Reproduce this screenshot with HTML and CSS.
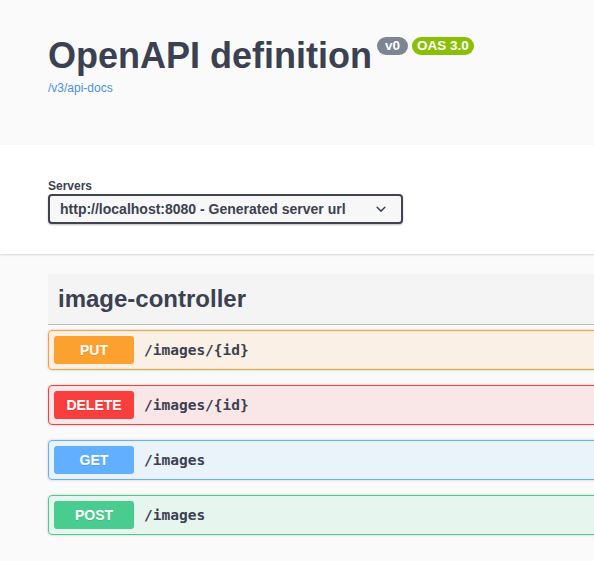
FILE: index.html
```html
<!DOCTYPE html>
<html lang="en">
<head>
<meta charset="utf-8">
<title>Swagger UI</title>
<link rel="stylesheet" href="styles.css">
</head>
<body>
<div class="page">
  <section class="info">
    <div class="wrapper">
      <div class="title-row">
        <h2 class="title">OpenAPI definition</h2>
        <span class="badge badge-version">v0</span>
        <span class="badge badge-oas">OAS 3.0</span>
      </div>
      <a class="spec-link" href="#">/v3/api-docs</a>
    </div>
  </section>

  <section class="scheme">
    <div class="wrapper">
      <div class="servers-label">Servers</div>
      <div class="select">
        <span class="select-text">http://localhost:8080 - Generated server url</span>
        <svg class="select-arrow" viewBox="0 0 20 20" width="20" height="20" aria-hidden="true">
          <path d="M13.418 7.859a.695.695 0 0 1 .978 0 .68.68 0 0 1 0 .969l-3.908 3.83a.697.697 0 0 1-.979 0l-3.908-3.83a.68.68 0 0 1 0-.969.695.695 0 0 1 .978 0L10 11l3.418-3.141z" fill="#3b4151"/>
        </svg>
      </div>
    </div>
  </section>

  <section class="operations">
    <div class="wrapper">
      <h3 class="tag">image-controller</h3>
      <div class="opblock opblock-put">
        <span class="method">PUT</span>
        <span class="path">/images/{id}</span>
      </div>
      <div class="opblock opblock-delete">
        <span class="method">DELETE</span>
        <span class="path">/images/{id}</span>
      </div>
      <div class="opblock opblock-get">
        <span class="method">GET</span>
        <span class="path">/images</span>
      </div>
      <div class="opblock opblock-post">
        <span class="method">POST</span>
        <span class="path">/images</span>
      </div>
    </div>
  </section>
</div>
</body>
</html>
```

FILE: styles.css
```css
html, body {
  margin: 0;
  padding: 0;
  background: #fafafa;
  overflow: hidden;
}

body {
  font-family: "Liberation Sans", Arial, sans-serif;
  color: #3b4151;
}

.page {
  width: 1100px;
}

.wrapper {
  padding: 0 48px;
}

/* Info header */
.info {
  background: #fafafa;
  height: 145px;
  box-sizing: border-box;
  padding-top: 37px;
}

.title-row {
  display: flex;
  align-items: flex-start;
}

.title {
  margin: 1px 0 0;
  font-size: 36px;
  line-height: 36px;
  font-weight: 700;
  color: #3b4151;
}

.badge {
  display: inline-block;
  height: 18px;
  box-sizing: border-box;
  font-size: 13.5px;
  line-height: 18px;
  font-weight: 700;
  color: #fff;
  border-radius: 57px;
}

.badge-version {
  background: #7d8492;
  margin-left: 5px;
  padding: 0 8px;
}

.badge-oas {
  background: #89bf04;
  margin-left: 4px;
  padding: 0 5px;
}

.spec-link {
  display: block;
  margin-top: 7px;
  font-size: 12px;
  line-height: 14px;
  color: #4990e2;
  text-decoration: none;
}

/* Servers */
.scheme {
  background: #fff;
  height: 109px;
  box-sizing: border-box;
  padding-top: 34px;
  box-shadow: 0 1px 2px 0 rgba(0, 0, 0, 0.15);
  position: relative;
}

.servers-label {
  font-size: 12px;
  line-height: 14px;
  font-weight: 700;
  color: #3b4151;
  margin-bottom: 1px;
}

.select {
  display: flex;
  align-items: center;
  justify-content: space-between;
  width: 355px;
  height: 30px;
  box-sizing: border-box;
  border: 2px solid #41444e;
  border-radius: 4px;
  background: #f7f7f7;
  box-shadow: 0 1px 2px 0 rgba(0, 0, 0, 0.25);
  padding: 0 10px;
}

.select-text {
  font-size: 14px;
  line-height: 26px;
  font-weight: 700;
  color: #3b4151;
}

.select-arrow {
  display: block;
}

/* Operations */
.operations {
  padding-top: 20px;
}

.tag {
  margin: 0 0 5px;
  padding: 10px 20px 10px 10px;
  font-size: 24px;
  line-height: 30px;
  font-weight: 700;
  color: #3b4151;
  background: #f4f4f4;
  border-bottom: 1px solid rgba(59, 65, 81, 0.3);
}

.opblock {
  display: flex;
  align-items: center;
  padding: 5px;
  margin-bottom: 15px;
  border: 1px solid;
  border-radius: 4px;
  box-shadow: 0 0 3px rgba(0, 0, 0, 0.19);
}

.method {
  min-width: 80px;
  box-sizing: border-box;
  padding: 6px 0;
  font-size: 14px;
  line-height: 16px;
  font-weight: 700;
  text-align: center;
  color: #fff;
  border-radius: 3px;
  text-shadow: 0 1px 0 rgba(0, 0, 0, 0.1);
}

.path {
  padding: 0 10px;
  font-family: "DejaVu Sans Mono", "Liberation Mono", monospace;
  font-size: 14.5px;
  font-weight: 700;
  color: #3b4151;
}

.opblock-put {
  background: rgba(252, 161, 48, 0.1);
  border-color: #fca130;
}
.opblock-put .method { background: #fca130; }

.opblock-delete {
  background: rgba(249, 62, 62, 0.1);
  border-color: #f93e3e;
}
.opblock-delete .method { background: #f93e3e; }

.opblock-get {
  background: rgba(97, 175, 254, 0.1);
  border-color: #61affe;
}
.opblock-get .method { background: #61affe; }

.opblock-post {
  background: rgba(73, 204, 144, 0.1);
  border-color: #49cc90;
}
.opblock-post .method { background: #49cc90; }
```
